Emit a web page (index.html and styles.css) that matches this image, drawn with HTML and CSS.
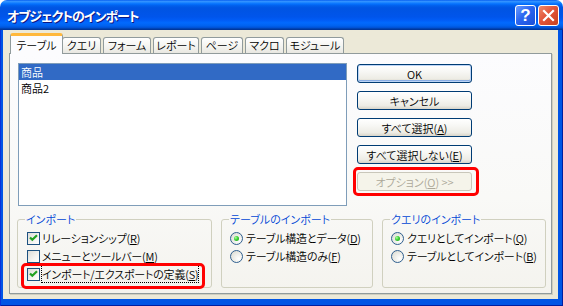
FILE: index.html
```html
<!DOCTYPE html>
<html lang="ja">
<head>
<meta charset="utf-8">
<title>オブジェクトのインポート</title>
<link rel="stylesheet" href="styles.css">
</head>
<body>
<div class="window">
  <div class="titlebar">
    <span class="title">オブジェクトのインポート</span>
    <div class="caption-buttons">
      <span class="cbtn help">?</span>
      <span class="cbtn close"><svg width="13" height="13" viewBox="0 0 13 13"><path d="M2 2 L11 11 M11 2 L2 11" stroke="#fff" stroke-width="2.2" stroke-linecap="square"/></svg></span>
    </div>
  </div>
  <div class="frame">
    <div class="client">
      <div class="tabs">
        <div class="tab active t-table">テーブル</div>
        <div class="tab t-query">クエリ</div>
        <div class="tab t-form">フォーム</div>
        <div class="tab t-report">レポート</div>
        <div class="tab t-page">ページ</div>
        <div class="tab t-macro">マクロ</div>
        <div class="tab t-module">モジュール</div>
      </div>
      <div class="panel">
        <div class="top-row">
          <div class="listbox">
            <div class="item sel">商品</div>
            <div class="item">商品2</div>
          </div>
          <div class="buttons">
            <button class="btn default">OK</button>
            <button class="btn">キャンセル</button>
            <button class="btn">すべて選択(<u>A</u>)</button>
            <button class="btn">すべて選択しない(<u>E</u>)</button>
            <div class="marked-btn"><button class="btn disabled">オプション(<u>O</u>) &gt;&gt;</button></div>
          </div>
        </div>
        <div class="groups">
          <fieldset class="group g-import">
            <legend>インポート</legend>
            <div class="opt"><span class="check on"><svg width="11" height="11" viewBox="0 0 11 11"><path d="M2 4.5 L4.3 6.8 L9 2.2" stroke="#21A121" stroke-width="2.2" fill="none"/></svg></span><span class="lbl">リレーションシップ(<u>R</u>)</span></div>
            <div class="opt"><span class="check"></span><span class="lbl">メニューとツールバー(<u>M</u>)</span></div>
            <div class="opt marked"><span class="check on"><svg width="11" height="11" viewBox="0 0 11 11"><path d="M2 4.5 L4.3 6.8 L9 2.2" stroke="#21A121" stroke-width="2.2" fill="none"/></svg></span><span class="lbl focus">インポート/エクスポートの定義(<u>S</u>)</span></div>
          </fieldset>
          <fieldset class="group g-table">
            <legend>テーブルのインポート</legend>
            <div class="opt"><span class="radio on"></span><span class="lbl">テーブル構造とデータ(<u>D</u>)</span></div>
            <div class="opt"><span class="radio"></span><span class="lbl">テーブル構造のみ(<u>F</u>)</span></div>
          </fieldset>
          <fieldset class="group g-query">
            <legend>クエリのインポート</legend>
            <div class="opt"><span class="radio on"></span><span class="lbl">クエリとしてインポート(<u>Q</u>)</span></div>
            <div class="opt"><span class="radio"></span><span class="lbl">テーブルとしてインポート(<u>B</u>)</span></div>
          </fieldset>
        </div>
      </div>
    </div>
  </div>
</div>
</body>
</html>
```

FILE: styles.css
```css
html, body {
  margin: 0;
  padding: 0;
}
body {
  width: 563px;
  height: 306px;
  overflow: hidden;
  background: #ffffff;
  font-family: "Noto Sans CJK JP", "Liberation Sans", sans-serif;
  font-size: 11px;
  font-weight: 350;
  font-feature-settings: "palt";
  color: #000;
}
.window {
  width: 563px;
  height: 306px;
  display: flex;
  flex-direction: column;
}
.titlebar {
  height: 30px;
  flex: none;
  display: flex;
  align-items: center;
  justify-content: space-between;
  padding: 0 4px 0 7px;
  border-radius: 7px 7px 0 0;
  background: linear-gradient(to bottom, #0058EE 0%, #3593FF 4%, #288EFF 7%, #127DFF 10%, #036FFC 14%, #0262EE 18%, #0057E5 24%, #0054E3 30%, #0055EB 56%, #005BF5 66%, #026AFE 76%, #0062EF 86%, #0052D6 92%, #0040AB 96%, #003092 100%);
}
.title {
  color: #fff;
  font-weight: bold;
  font-size: 13px;
  letter-spacing: -1px;
  text-shadow: 1px 1px 0 #0A1883;
}
.caption-buttons {
  display: flex;
  gap: 2px;
  margin-top: 1px;
}
.cbtn {
  width: 21px;
  height: 21px;
  box-sizing: border-box;
  border: 1px solid #fff;
  border-radius: 3px;
  display: flex;
  align-items: center;
  justify-content: center;
  color: #fff;
}
.help {
  background: linear-gradient(135deg, #6A9CFF 0%, #2B66F0 45%, #1A4FD8 100%);
  font-family: "Liberation Sans", sans-serif;
  font-weight: bold;
  font-size: 17px;
}
.close {
  background: linear-gradient(135deg, #F08A6A 0%, #E2553A 45%, #C7411E 100%);
}
.frame {
  flex: 1;
  display: flex;
  padding: 0 6px 7px 3px;
  background: #0055E5;
  box-shadow: inset 1px 0 #0831D9, inset -1px 0 #001EA0, inset 0 -1px #001EA0;
}
.client {
  flex: 1;
  background: #ECE9D8;
  display: flex;
  flex-direction: column;
}
.tabs {
  display: flex;
  align-items: flex-end;
  height: 21px;
  margin: 3px 0 -1px 7px;
  position: relative;
  z-index: 1;
}
.tab {
  height: 16px;
  box-sizing: border-box;
  margin-bottom: 1px;
  margin-right: 2px;
  border: 1px solid #919B9C;
  border-bottom: none;
  border-radius: 3px 3px 0 0;
  background: linear-gradient(to bottom, #FFFFFF, #F3F3EF 60%, #E8E7E1);
  text-align: center;
  line-height: 15px;
  white-space: nowrap;
}
.tab.active {
  height: 21px;
  margin-bottom: 0;
  margin-right: -1px;
  border-top: 3px solid #FFB83C;
  background: #FCFCFE;
  line-height: 18px;
}
.t-table { width: 53px; }
.t-query { width: 39px; }
.t-form { width: 48px; }
.t-report { width: 46px; }
.t-page { width: 42px; }
.t-macro { width: 39px; }
.t-module { width: 58px; }
.panel {
  flex: 1;
  margin: 0 6px 5px 6px;
  border: 1px solid #919B9C;
  box-shadow: 1px 1px 0 #D0CEBF;
  background: linear-gradient(to bottom, #FCFCFE 0%, #F9F9F7 60%, #F4F3EE 100%);
  padding: 9px 5px 5px 7px;
  display: flex;
  flex-direction: column;
}
.top-row {
  display: flex;
  gap: 10px;
  margin-left: 1px;
  height: 143px;
}
.listbox {
  width: 329px;
  box-sizing: border-box;
  border: 1px solid #7F9DB9;
  background: #fff;
  padding: 0;
}
.item {
  height: 16px;
  line-height: 16px;
  padding-left: 2px;
}
.item.sel {
  background: #316AC5;
  color: #fff;
}
.buttons {
  display: flex;
  flex-direction: column;
  gap: 8px;
  margin-top: 1px;
}
.btn {
  width: 115px;
  height: 19px;
  box-sizing: border-box;
  border: 1px solid #003C74;
  border-radius: 3px;
  background: linear-gradient(to bottom, #FFFFFF 0%, #F7F7F4 40%, #EDECE5 80%, #D8D4C8 100%);
  font: inherit;
  font-feature-settings: "palt";
  color: #000;
  padding: 0;
  line-height: 16px;
}
.btn.default {
  box-shadow: inset 0 0 0 1px #BCD4F6, inset 0 -1px 0 1px #89ADE4;
}
.btn.disabled {
  border-color: #C9C7BA;
  background: #F5F4EA;
  color: #ACA899;
}
.marked-btn {
  position: relative;
}
.marked-btn::after {
  content: "";
  position: absolute;
  left: -4px;
  top: -5px;
  width: 126px;
  height: 29px;
  box-sizing: border-box;
  border: 3px solid #FF0000;
  border-radius: 5px;
}
.groups {
  flex: 1;
  margin-top: 6px;
  display: grid;
  grid-template-columns: 195px 152px 164px;
  gap: 9px;
}
.group {
  margin: 0;
  min-width: 0;
  border: 1px solid #D0D0BF;
  border-radius: 3px;
  padding: 3px 0 4px 8px;
  display: flex;
  flex-direction: column;
}
.group legend {
  color: #0046D5;
  line-height: 14px;
  padding: 0 1px;
  margin-left: -1px;
}
.opt {
  display: flex;
  align-items: center;
  height: 18px;
  position: relative;
}
.check {
  flex: none;
  width: 13px;
  height: 13px;
  box-sizing: border-box;
  border: 1px solid #1C5180;
  background: linear-gradient(135deg, #DCDCD7 0%, #F4F4F1 60%, #FFFFFF 100%);
  margin-left: 1px;
  display: flex;
  align-items: center;
  justify-content: center;
}
.radio {
  flex: none;
  width: 13px;
  height: 13px;
  box-sizing: border-box;
  border: 1px solid #2F5F8F;
  border-radius: 50%;
  background: radial-gradient(circle at 70% 70%, #FFFFFF 0%, #E8E8E2 60%, #D4D4CC 100%);
  position: relative;
}
.radio.on::after {
  content: "";
  position: absolute;
  left: 3px;
  top: 3px;
  width: 5px;
  height: 5px;
  border-radius: 50%;
  background: radial-gradient(circle at 35% 35%, #B0FFA0 0%, #3CD034 45%, #1AA014 100%);
}
.lbl {
  margin-left: 2px;
  white-space: nowrap;
  letter-spacing: -0.2px;
}
.radio + .lbl {
  margin-left: 3px;
}
.lbl.focus {
  outline: 1px dotted #000;
  outline-offset: 0;
}
.opt.marked::after {
  content: "";
  position: absolute;
  left: -5px;
  top: -2px;
  width: 184px;
  height: 26px;
  box-sizing: border-box;
  border: 3px solid #FF0000;
  border-radius: 5px;
}
u {
  text-decoration: underline;
  text-underline-offset: 1px;
}
```
